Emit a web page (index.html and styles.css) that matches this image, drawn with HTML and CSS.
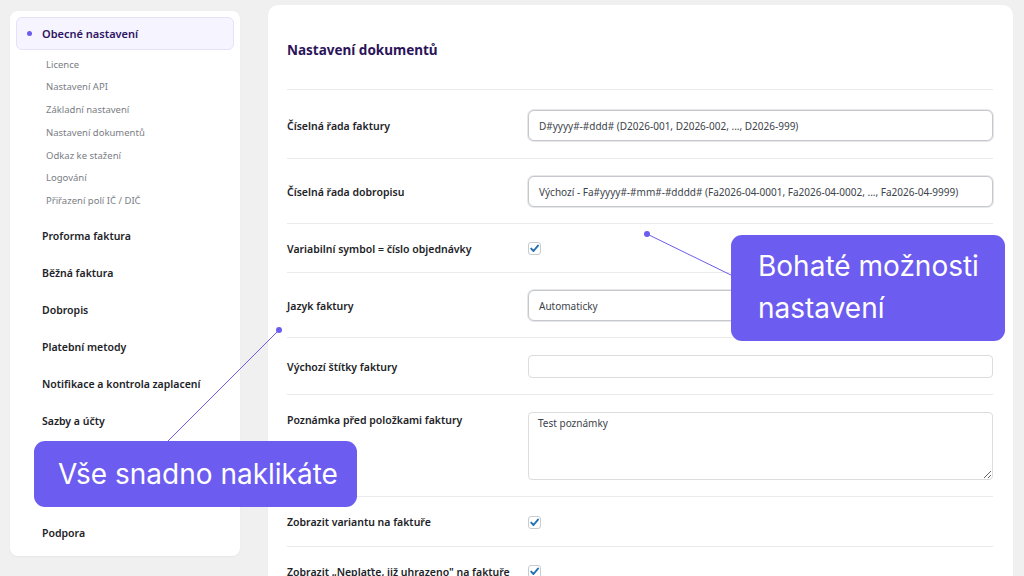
FILE: index.html
```html
<!DOCTYPE html>
<html lang="cs">
<head>
<meta charset="utf-8">
<title>Nastavení dokumentů</title>
<link rel="stylesheet" href="styles.css">
</head>
<body>
<div class="app">
  <aside class="sidebar">
    <div class="nav-active"><span class="nav-dot"></span>Obecné nastavení</div>
    <ul class="subnav">
      <li>Licence</li>
      <li>Nastavení API</li>
      <li>Základní nastavení</li>
      <li>Nastavení dokumentů</li>
      <li>Odkaz ke stažení</li>
      <li>Logování</li>
      <li>Přiřazení polí IČ / DIČ</li>
    </ul>
    <ul class="mainnav">
      <li>Proforma faktura</li>
      <li>Běžná faktura</li>
      <li>Dobropis</li>
      <li>Platební metody</li>
      <li>Notifikace a kontrola zaplacení</li>
      <li>Sazby a účty</li>
      <li class="nav-gap" aria-hidden="true"></li>
      <li>Podpora</li>
    </ul>
  </aside>

  <main class="content">
    <h1 class="title">Nastavení dokumentů</h1>

    <div class="row row-first">
      <div class="label">Číselná řada faktury</div>
      <div class="field"><div class="input strong">D#yyyy#-#ddd# (D2026-001, D2026-002, ..., D2026-999)</div></div>
    </div>

    <div class="row">
      <div class="label">Číselná řada dobropisu</div>
      <div class="field"><div class="input strong">Výchozí - Fa#yyyy#-#mm#-#dddd# (Fa2026-04-0001, Fa2026-04-0002, ..., Fa2026-04-9999)</div></div>
    </div>

    <div class="row row-check">
      <div class="label">Variabilní symbol = číslo objednávky</div>
      <div class="field">
        <span class="checkbox"><svg viewBox="0 0 13 13" width="13" height="13"><path d="M3.2 6.6 L5.5 9 L10 3.6" fill="none" stroke="#2271b1" stroke-width="1.9" stroke-linecap="round" stroke-linejoin="round"/></svg></span>
      </div>
    </div>

    <div class="row">
      <div class="label">Jazyk faktury</div>
      <div class="field"><div class="input strong">Automaticky</div></div>
    </div>

    <div class="row">
      <div class="label">Výchozí štítky faktury</div>
      <div class="field"><div class="input light"></div></div>
    </div>

    <div class="row row-top">
      <div class="label label-top">Poznámka před položkami faktury</div>
      <div class="field"><textarea class="textarea">Test poznámky</textarea></div>
    </div>

    <div class="row row-check row-check-tall">
      <div class="label">Zobrazit variantu na faktuře</div>
      <div class="field">
        <span class="checkbox"><svg viewBox="0 0 13 13" width="13" height="13"><path d="M3.2 6.6 L5.5 9 L10 3.6" fill="none" stroke="#2271b1" stroke-width="1.9" stroke-linecap="round" stroke-linejoin="round"/></svg></span>
      </div>
    </div>

    <div class="row row-check">
      <div class="label">Zobrazit „Neplaťte, již uhrazeno" na faktuře</div>
      <div class="field">
        <span class="checkbox"><svg viewBox="0 0 13 13" width="13" height="13"><path d="M3.2 6.6 L5.5 9 L10 3.6" fill="none" stroke="#2271b1" stroke-width="1.9" stroke-linecap="round" stroke-linejoin="round"/></svg></span>
      </div>
    </div>
  </main>
</div>

<svg class="connectors" width="1024" height="576" viewBox="0 0 1024 576">
  <line x1="647" y1="234" x2="735" y2="277" stroke="#6c5cf0" stroke-width="1"/>
  <circle cx="647" cy="234" r="3" fill="#6c5cf0"/>
  <line x1="279" y1="330" x2="166" y2="443" stroke="#6c5cf0" stroke-width="1"/>
  <circle cx="279" cy="330" r="3" fill="#6c5cf0"/>
</svg>

<div class="bubble bubble-right">Bohaté možnosti<br>nastavení</div>
<div class="bubble bubble-left">Vše snadno naklikáte</div>
</body>
</html>
```

FILE: styles.css
```css
* { box-sizing: border-box; }

html, body {
  margin: 0;
  padding: 0;
  width: 1024px;
  height: 576px;
  overflow: hidden;
  background: #f0f0f1;
  font-family: "Noto Sans", "Open Sans", sans-serif;
  color: #1d2327;
}

.app {
  display: flex;
  align-items: flex-start;
  padding-left: 10px;
}

/* Sidebar */
.sidebar {
  width: 230px;
  height: 545px;
  margin-top: 11px;
  background: #fff;
  border-radius: 8px;
  padding: 6px;
  box-shadow: 0 1px 2px rgba(0,0,0,0.04);
}

.nav-active {
  display: flex;
  align-items: center;
  height: 33px;
  padding-left: 10px;
  background: #f6f4ff;
  border: 1px solid #e6e0fb;
  border-radius: 6px;
  font-size: 11px;
  font-weight: 600;
  color: #2e1462;
}

.nav-dot {
  width: 5px;
  height: 5px;
  border-radius: 50%;
  background: #6c5cf0;
  margin-right: 10px;
}

.subnav, .mainnav {
  list-style: none;
  margin: 0;
  padding: 0;
}

.subnav {
  margin-top: 3.7px;
}

.subnav li {
  height: 22.75px;
  line-height: 22.75px;
  padding-left: 30px;
  font-size: 9.5px;
  color: #7a7d84;
}

.mainnav {
  margin-top: 5px;
}

.mainnav li {
  height: 37.1px;
  line-height: 37.1px;
  padding-left: 26px;
  font-size: 10.5px;
  font-weight: 600;
  color: #1d2327;
}

.mainnav li.nav-gap {
  height: 74.2px;
}

/* Main card */
.content {
  width: 745px;
  height: 700px;
  margin-top: 5px;
  margin-left: 28px;
  background: #fff;
  border-radius: 10px;
  padding: 35px 20px 0 19px;
  box-shadow: 0 1px 2px rgba(0,0,0,0.04);
}

.title {
  margin: 0 0 29px 0;
  font-size: 13.5px;
  line-height: 20px;
  font-weight: 700;
  color: #2b1459;
}

.row {
  display: flex;
  align-items: center;
  padding: 17px 0 16px;
  border-top: 1px solid #ebebec;
}

.row-first {
  padding-top: 20px;
  padding-bottom: 17px;
}

.row-top {
  align-items: flex-start;
}

.row-check {
  min-height: 49px;
}

.row-check-tall {
  min-height: 50px;
}

.label {
  width: 241px;
  flex-shrink: 0;
  font-size: 10.5px;
  font-weight: 600;
  line-height: 14px;
  color: #1d2327;
}

.label-top {
  padding-top: 1px;
}

.field {
  flex: 1;
  display: flex;
  align-items: center;
}

.input {
  width: 100%;
  display: flex;
  align-items: center;
  padding-left: 10px;
  font-size: 10px;
  color: #3c434a;
  background: #fff;
  white-space: nowrap;
  overflow: hidden;
}

.input.strong {
  height: 31px;
  border: 1px solid #c6c8cd;
  border-radius: 6px;
  box-shadow: 0 0 0 1px #e6e7e9;
}

.input.light {
  height: 23px;
  border: 1px solid #dcdcde;
  border-radius: 4px;
  margin-right: -1px;
}

.textarea {
  width: 100%;
  height: 68px;
  margin: 0 -1px 0 0;
  padding: 3px 9px;
  border: 1px solid #dcdcde;
  border-radius: 4px;
  font-family: "Noto Sans", "Open Sans", sans-serif;
  font-size: 10px;
  line-height: 14px;
  color: #3c434a;
  resize: vertical;
}

.checkbox {
  width: 13px;
  height: 13px;
  display: inline-flex;
  border: 1px solid #c9cbcf;
  border-radius: 3px;
  background: #fff;
}

.checkbox svg {
  display: block;
  margin: -1px;
}

/* Annotations (overlays) */
.connectors {
  position: absolute;
  left: 0;
  top: 0;
  pointer-events: none;
}

.bubble {
  position: absolute;
  background: #6c5cf0;
  color: #fff;
  font-family: Inter, "Noto Sans", sans-serif;
  font-size: 28px;
  font-weight: 400;
  border-radius: 11px;
}

.bubble-right {
  left: 731px;
  top: 235px;
  width: 274px;
  height: 106px;
  padding: 10px 0 0 27px;
  line-height: 42px;
}

.bubble-left {
  left: 34px;
  top: 441px;
  width: 323px;
  height: 66px;
  padding-left: 24px;
  line-height: 66px;
}
```
